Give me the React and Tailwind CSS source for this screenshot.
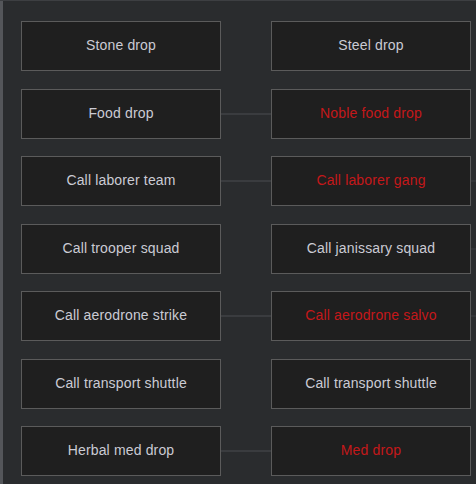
import React from 'react';

const rows = [
  { left: 'Stone drop', right: 'Steel drop' },
  { left: 'Food drop', right: 'Noble food drop', red: true, link: true },
  { left: 'Call laborer team', right: 'Call laborer gang', red: true, link: true, stub: true },
  { left: 'Call trooper squad', right: 'Call janissary squad', stub: true },
  { left: 'Call aerodrone strike', right: 'Call aerodrone salvo', red: true, link: true, stub: true },
  { left: 'Call transport shuttle', right: 'Call transport shuttle' },
  { left: 'Herbal med drop', right: 'Med drop', red: true, link: true },
];

function Card({ label, red }) {
  return (
    <div
      className={`w-[200px] h-[50px] shrink-0 flex items-center justify-center pb-[1px] bg-[#1f1f1f] border border-[#5b5b5b] text-[14px] tracking-[0.15px] ${
        red ? 'text-[#c4181a]' : 'text-[#cbcbd4]'
      }`}
    >
      {label}
    </div>
  );
}

export default function App() {
  return (
    <div className="w-[476px] h-[484px] overflow-hidden bg-[#2a2c2e] border-t border-[#3d3f42] flex font-['Liberation_Sans',Arial,sans-serif]">
      <div className="w-[3px] shrink-0 bg-[#54565a]" />
      <div className="flex flex-col gap-[17.5px] pt-[20px] pl-[18px]">
        {rows.map((r, i) => (
          <div key={i} className="flex items-center">
            <Card label={r.left} />
            <div className={`w-[50px] h-[2px] ${r.link ? 'bg-[#3a3c3f]' : ''}`} />
            <Card label={r.right} red={r.red} />
            <div className={`w-[6px] h-[2px] ${r.stub ? 'bg-[#333538]' : ''}`} />
          </div>
        ))}
      </div>
    </div>
  );
}
